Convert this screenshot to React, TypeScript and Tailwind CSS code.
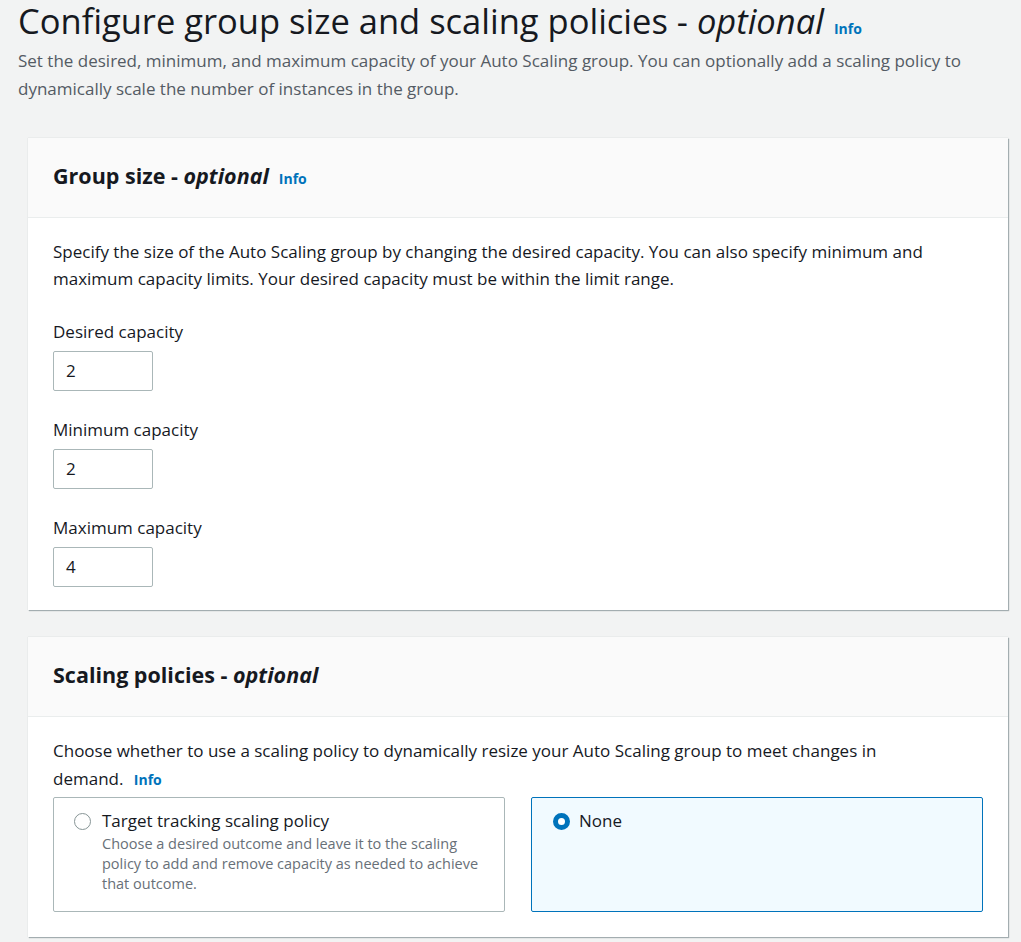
import React from "react";

const font = { fontFamily: '"Open Sans", "Noto Sans", Arial, sans-serif' };

function Info({ gap = "ml-[10px]" }: { gap?: string }) {
  return <span className={`inline-block text-[14px] leading-none font-bold text-[#0073bb] ${gap}`}>Info</span>;
}

function CapacityField({ label, value, first }: { label: string; value: string; first?: boolean }) {
  return (
    <div className={first ? "mt-[29px]" : "mt-[28px]"}>
      <div className="text-[17px] leading-[22px] text-[#16191f]">{label}</div>
      <div className="mt-[8px] w-[100px] h-[40px] border border-[#aab7b8] rounded-[2px] flex items-center px-[12px] text-[17px] text-[#16191f]">
        {value}
      </div>
    </div>
  );
}

function Card({ title, body, children }: { title: React.ReactNode; body: string; children: React.ReactNode }) {
  return (
    <section className="bg-white shadow-[1px_1px_1px_0_rgba(0,28,36,0.3),0_0_1px_0_rgba(0,28,36,0.2)]">
      <div className="bg-[#fafafa] border-b border-[#eaeded] h-[80px] px-[25px] pb-[3px] flex items-center">
        <h2 className="text-[21.5px] leading-[30px] font-bold text-[#16191f]">{title}</h2>
      </div>
      <div className={`px-[25px] ${body}`}>{children}</div>
    </section>
  );
}

export default function App() {
  return (
    <div className="min-h-screen bg-[#f2f3f3] pl-[18px] pr-[13px] pt-[2px]" style={font}>
      <h1 className="text-[34.5px] leading-[38px] font-normal text-[#16191f]">
        Configure group size and scaling policies - <i>optional</i>
        <Info />
      </h1>
      <p className="text-[17px] leading-[28px] text-[#545b64] mt-[7px] pr-[30px]">
        Set the desired, minimum, and maximum capacity of your Auto Scaling group. You can optionally add a scaling policy to dynamically scale the number of instances in the group.
      </p>

      <div className="ml-[10px] mt-[35px] flex flex-col gap-[27px]">
        <Card
          body="pt-[20px] pb-[23px]"
          title={
            <>
              Group size - <i>optional</i>
              <Info />
            </>
          }
        >
          <p className="text-[17px] leading-[27px] text-[#16191f]">
            Specify the size of the Auto Scaling group by changing the desired capacity. You can also specify minimum and maximum capacity limits. Your desired capacity must be within the limit range.
          </p>
          <CapacityField label="Desired capacity" value="2" first />
          <CapacityField label="Minimum capacity" value="2" />
          <CapacityField label="Maximum capacity" value="4" />
        </Card>

        <Card
          body="pt-[20px] pb-[25px]"
          title={
            <>
              Scaling policies - <i>optional</i>
            </>
          }
        >
          <p className="text-[17px] leading-[28px] text-[#16191f] max-w-[860px]">
            Choose whether to use a scaling policy to dynamically resize your Auto Scaling group to meet changes in demand. <Info gap="ml-[6px]" />
          </p>
          <div className="grid grid-cols-2 gap-[26px] mt-[4px]">
            <div className="border border-[#aab7b8] rounded-[2px] h-[115px] pl-[20px] pr-[20px] pt-[12px] flex gap-[11px]">
              <span className="mt-[3px] w-[17px] h-[17px] rounded-full border-[1.5px] border-[#879596] shrink-0" />
              <div className="max-w-[385px]">
                <div className="text-[17px] leading-[22px] text-[#16191f]">Target tracking scaling policy</div>
                <div className="text-[14.5px] leading-[20px] text-[#687078] mt-[2px]">
                  Choose a desired outcome and leave it to the scaling policy to add and remove capacity as needed to achieve that outcome.
                </div>
              </div>
            </div>
            <div className="border border-[#0073bb] rounded-[2px] h-[115px] bg-[#f1faff] pl-[21px] pt-[12px] flex gap-[9px]">
              <span className="mt-[3px] w-[17px] h-[17px] rounded-full border-[5px] border-[#0073bb] bg-white shrink-0" />
              <div className="text-[17px] leading-[22px] text-[#16191f]">None</div>
            </div>
          </div>
        </Card>
      </div>
    </div>
  );
}
